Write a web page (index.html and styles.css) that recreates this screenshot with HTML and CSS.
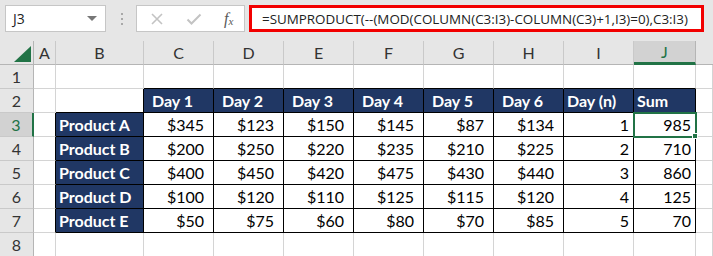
FILE: index.html
```html
<!DOCTYPE html>
<html>
<head>
<meta charset="utf-8">
<link rel="stylesheet" href="styles.css">
</head>
<body>
<div class="fbar">
  <div class="namebox"><span>J3</span><span class="dd"></span></div>
  <div class="sep"><i></i><i></i><i></i></div>
  <div class="fxbox">
    <svg class="ico" width="14" height="14" viewBox="0 0 14 14"><path d="M2 2L12 12M12 2L2 12" stroke="#c3c3c3" stroke-width="1.6" fill="none"/></svg>
    <svg class="ico" width="16" height="14" viewBox="0 0 16 14"><path d="M1.5 7.5L5.5 11.5L14.5 2.5" stroke="#c3c3c3" stroke-width="2" fill="none"/></svg>
    <span class="fx">f<sub>x</sub></span>
  </div>
  <div class="formula">=SUMPRODUCT(--(MOD(COLUMN(C3:I3)-COLUMN(C3)+1,I3)=0),C3:I3)</div>
</div>
<div class="sheet">
  <div class="ch corner"><span class="tri"></span></div>
  <div class="ch">A</div><div class="ch">B</div><div class="ch">C</div><div class="ch">D</div><div class="ch">E</div><div class="ch">F</div><div class="ch">G</div><div class="ch">H</div><div class="ch">I</div><div class="ch sel">J</div><div class="ch last"></div>

  <div class="rh">1</div>
  <div class="c"></div><div class="c"></div><div class="c bb"></div><div class="c bb"></div><div class="c bb"></div><div class="c bb"></div><div class="c bb"></div><div class="c bb"></div><div class="c bb"></div><div class="c bb"></div><div class="c"></div>

  <div class="rh">2</div>
  <div class="c"></div><div class="c bb br"></div><div class="c h ind">Day 1</div><div class="c h ind">Day 2</div><div class="c h ind">Day 3</div><div class="c h ind">Day 4</div><div class="c h ind">Day 5</div><div class="c h ind">Day 6</div><div class="c h">Day (n)</div><div class="c h">Sum</div><div class="c"></div>

  <div class="rh sel">3</div>
  <div class="c br"></div><div class="c h">Product A</div><div class="c t cur">$345</div><div class="c t cur">$123</div><div class="c t cur">$150</div><div class="c t cur">$145</div><div class="c t cur">$87</div><div class="c t cur">$134</div><div class="c t num">1</div><div class="c t num active">985<span class="handle"></span></div><div class="c"></div>

  <div class="rh">4</div>
  <div class="c br"></div><div class="c h">Product B</div><div class="c t cur">$200</div><div class="c t cur">$250</div><div class="c t cur">$220</div><div class="c t cur">$235</div><div class="c t cur">$210</div><div class="c t cur">$225</div><div class="c t num">2</div><div class="c t num">710</div><div class="c"></div>

  <div class="rh">5</div>
  <div class="c br"></div><div class="c h">Product C</div><div class="c t cur">$400</div><div class="c t cur">$450</div><div class="c t cur">$420</div><div class="c t cur">$475</div><div class="c t cur">$430</div><div class="c t cur">$440</div><div class="c t num">3</div><div class="c t num">860</div><div class="c"></div>

  <div class="rh">6</div>
  <div class="c br"></div><div class="c h">Product D</div><div class="c t cur">$100</div><div class="c t cur">$120</div><div class="c t cur">$110</div><div class="c t cur">$125</div><div class="c t cur">$115</div><div class="c t cur">$120</div><div class="c t num">4</div><div class="c t num">125</div><div class="c"></div>

  <div class="rh">7</div>
  <div class="c br"></div><div class="c h">Product E</div><div class="c t cur">$50</div><div class="c t cur">$75</div><div class="c t cur">$60</div><div class="c t cur">$80</div><div class="c t cur">$70</div><div class="c t cur">$85</div><div class="c t num">5</div><div class="c t num">70</div><div class="c"></div>

  <div class="rh">8</div>
  <div class="c"></div><div class="c"></div><div class="c"></div><div class="c"></div><div class="c"></div><div class="c"></div><div class="c"></div><div class="c"></div><div class="c"></div><div class="c"></div><div class="c"></div>
</div>
</body>
</html>
```
FILE: styles.css
```css
* { box-sizing: border-box; }
body {
  margin: 0;
  background: #fff;
  font-family: "Lato", "Liberation Sans", sans-serif;
  overflow: hidden;
}
.fbar {
  height: 41px;
  background: #e6e6e6;
  display: flex;
  align-items: flex-start;
  padding: 5px 0 0 5px;
}
.namebox {
  width: 101px;
  height: 27px;
  background: #fff;
  border: 1px solid #c6c6c6;
  display: flex;
  align-items: center;
  justify-content: space-between;
  padding: 0 8px 0 7px;
  font-family: "Open Sans", sans-serif;
  font-size: 14px;
  color: #222;
}
.dd {
  width: 0; height: 0;
  border-left: 5px solid transparent;
  border-right: 5px solid transparent;
  border-top: 5px solid #777;
}
.sep {
  margin-left: 15px;
  height: 27px;
  display: flex;
  flex-direction: column;
  justify-content: center;
  gap: 3px;
}
.sep i {
  display: block;
  width: 2px; height: 2px;
  background: #a8a8a8;
}
.fxbox {
  margin-left: 13px;
  width: 109px;
  height: 27px;
  background: #fff;
  border: 1px solid #c6c6c6;
  display: flex;
  align-items: center;
  padding-left: 13px;
}
.fxbox .ico + .ico { margin-left: 22px; }
.fx {
  margin-left: 22px;
  font-family: "Liberation Serif", serif;
  font-style: italic;
  font-size: 16px;
  color: #595959;
}
.fx sub { font-size: 11px; vertical-align: -1px; }
.formula {
  margin-left: 4px;
  width: 455px;
  height: 27px;
  border: 3px solid #f20000;
  background: #fff;
  display: flex;
  align-items: center;
  padding-left: 10px;
  font-family: "Open Sans", sans-serif;
  font-size: 13.4px;
  color: #222;
  white-space: nowrap;
}
.sheet {
  display: grid;
  grid-template-columns: 34px 22px 88px repeat(7, 70px) 62px 1fr;
  grid-template-rows: 24px;
  grid-auto-rows: 24px;
  font-size: 16px;
}
.ch {
  background: #e6e6e6;
  border-right: 1px solid #c9c9c9;
  border-bottom: 1px solid #b5b5b5;
  display: flex;
  align-items: center;
  justify-content: center;
  color: #333;
  font-size: 16px;
}
.ch.last { border-right: none; }
.ch.sel {
  background: #d2d2d2;
  color: #217346;
  border-bottom: 3px solid #217346;
  border-right-color: #b5b5b5;
}
.corner { position: relative; border-right-color: #b5b5b5; }
.tri {
  position: absolute;
  right: 2px; bottom: 2px;
  width: 0; height: 0;
  border-left: 17px solid transparent;
  border-bottom: 16px solid #217346;
}
.rh {
  background: #e6e6e6;
  border-right: 1px solid #b5b5b5;
  border-bottom: 1px solid #c9c9c9;
  display: flex;
  align-items: center;
  justify-content: center;
  color: #333;
  font-size: 16px;
}
.rh.sel {
  background: #d2d2d2;
  color: #217346;
  border-right: 2px solid #217346;
}
.c {
  border-right: 1px solid #d4d4d4;
  border-bottom: 1px solid #d4d4d4;
  display: flex;
  align-items: center;
  padding: 0 4px;
  white-space: nowrap;
  color: #000;
  position: relative;
}
.c.bb { border-bottom-color: #000; }
.c.br { border-right-color: #000; }
.c.t { border-right-color: #000; border-bottom-color: #000; justify-content: flex-end; }
.c.h {
  background: #203764;
  color: #fff;
  font-weight: bold;
  padding-left: 3px;
  border-right-color: #000;
  border-bottom-color: #000;
}
.c.ind { padding-left: 8px; }
.c.cur { padding-right: 9px; }
.c.num { padding-right: 4px; }
.active { outline: 2px solid #217346; outline-offset: -1px; z-index: 2; }
.handle {
  position: absolute;
  right: -3px;
  bottom: -3px;
  width: 6px;
  height: 6px;
  background: #217346;
  border: 1px solid #fff;
}
```
